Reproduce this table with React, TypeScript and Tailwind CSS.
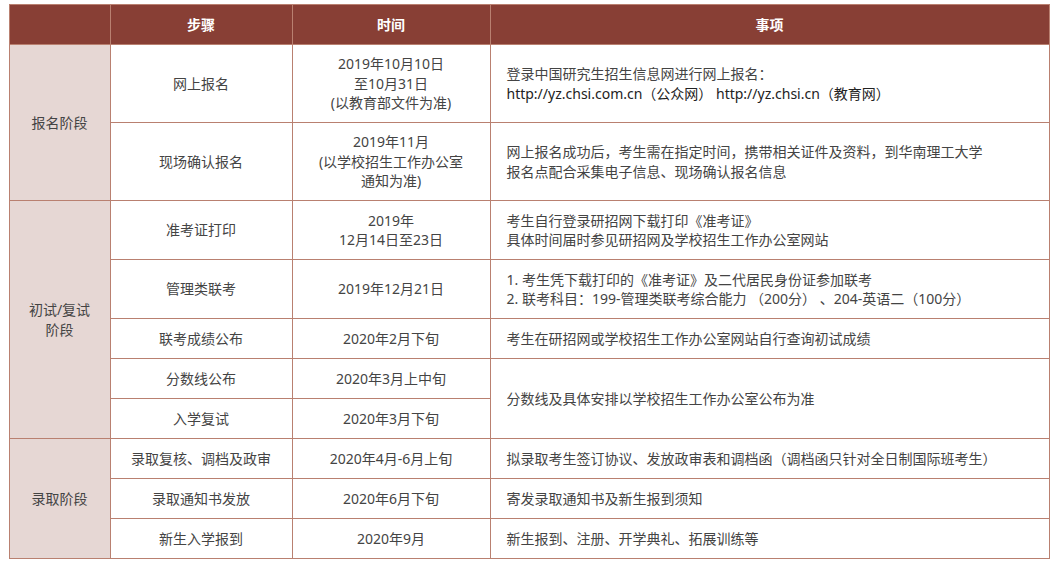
import React from "react";

const td = "border border-[#b98070] text-center align-middle px-2";
const tdc = "border border-[#b98070] text-left align-middle pl-4 pr-2";

export default function App() {
  return (
    <div
      className="w-[1058px] h-[563px] bg-white pt-[4px] text-[14px] leading-[19.5px] text-[#444]"
      style={{ fontFamily: '"Noto Sans", "Noto Sans CJK SC", sans-serif' }}
    >
      <table className="mx-auto w-[1040px] table-fixed border-collapse">
        <colgroup>
          <col className="w-[101px]" />
          <col className="w-[182px]" />
          <col className="w-[198px]" />
          <col className="w-[559px]" />
        </colgroup>
        <thead>
          <tr className="h-[40px] bg-[#883f35] text-white font-bold">
            <th className="border border-[#b98070]"></th>
            <th className="border border-[#b98070]">步骤</th>
            <th className="border border-[#b98070]">时间</th>
            <th className="border border-[#b98070]">事项</th>
          </tr>
        </thead>
        <tbody>
          <tr className="h-[78px]">
            <td rowSpan={2} className={td + " bg-[#e6d7d4]"}>报名阶段</td>
            <td className={td}>网上报名</td>
            <td className={td}>
              2019年10月10日<br />至10月31日<br />(以教育部文件为准)
            </td>
            <td className={tdc}>
              登录中国研究生招生信息网进行网上报名：<br />
              <span className="text-[#222]">http://yz.chsi.com.cn（公众网） http://yz.chsi.cn（教育网）</span>
            </td>
          </tr>
          <tr className="h-[78px]">
            <td className={td}>现场确认报名</td>
            <td className={td}>
              2019年11月<br />(以学校招生工作办公室<br />通知为准)
            </td>
            <td className={tdc}>
              网上报名成功后，考生需在指定时间，携带相关证件及资料，到华南理工大学<br />
              报名点配合采集电子信息、现场确认报名信息
            </td>
          </tr>
          <tr className="h-[59px]">
            <td rowSpan={5} className={td + " bg-[#e6d7d4]"}>
              初试/复试<br />阶段
            </td>
            <td className={td}>准考证打印</td>
            <td className={td}>
              2019年<br />12月14日至23日
            </td>
            <td className={tdc}>
              考生自行登录研招网下载打印《准考证》<br />
              具体时间届时参见研招网及学校招生工作办公室网站
            </td>
          </tr>
          <tr className="h-[59px]">
            <td className={td}>管理类联考</td>
            <td className={td}>2019年12月21日</td>
            <td className={tdc}>
              1. 考生凭下载打印的《准考证》及二代居民身份证参加联考<br />
              2. 联考科目：199-管理类联考综合能力 （200分） 、204-英语二（100分）
            </td>
          </tr>
          <tr className="h-[40px]">
            <td className={td}>联考成绩公布</td>
            <td className={td}>2020年2月下旬</td>
            <td className={tdc}>考生在研招网或学校招生工作办公室网站自行查询初试成绩</td>
          </tr>
          <tr className="h-[40px]">
            <td className={td}>分数线公布</td>
            <td className={td}>2020年3月上中旬</td>
            <td rowSpan={2} className={tdc}>分数线及具体安排以学校招生工作办公室公布为准</td>
          </tr>
          <tr className="h-[40px]">
            <td className={td}>入学复试</td>
            <td className={td}>2020年3月下旬</td>
          </tr>
          <tr className="h-[40px]">
            <td rowSpan={3} className={td + " bg-[#e6d7d4]"}>录取阶段</td>
            <td className={td}>录取复核、调档及政审</td>
            <td className={td}>2020年4月-6月上旬</td>
            <td className={tdc}>拟录取考生签订协议、发放政审表和调档函（调档函只针对全日制国际班考生）</td>
          </tr>
          <tr className="h-[40px]">
            <td className={td}>录取通知书发放</td>
            <td className={td}>2020年6月下旬</td>
            <td className={tdc}>寄发录取通知书及新生报到须知</td>
          </tr>
          <tr className="h-[40px]">
            <td className={td}>新生入学报到</td>
            <td className={td}>2020年9月</td>
            <td className={tdc}>新生报到、注册、开学典礼、拓展训练等</td>
          </tr>
        </tbody>
      </table>
    </div>
  );
}
